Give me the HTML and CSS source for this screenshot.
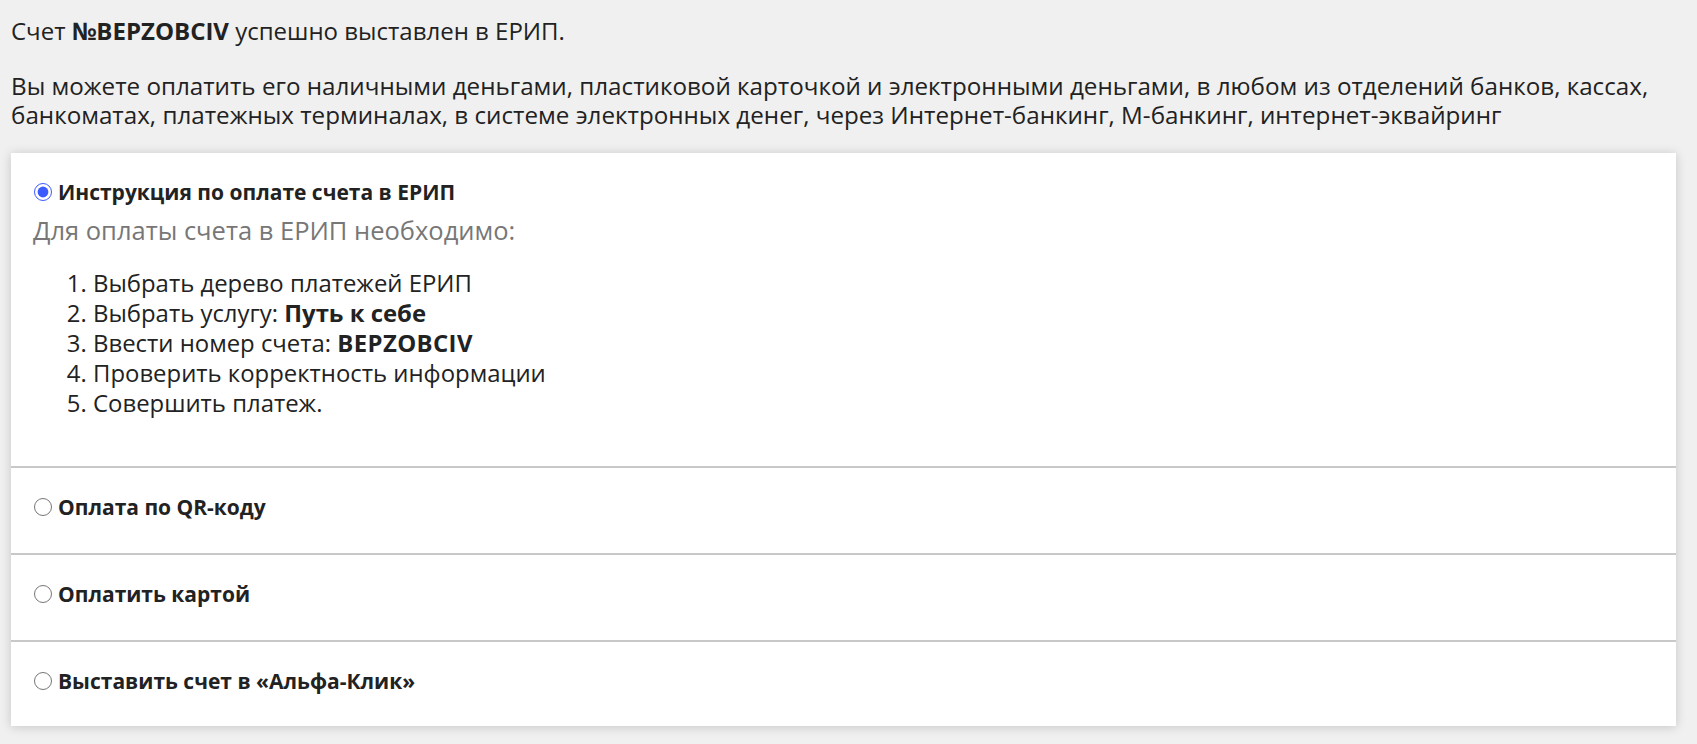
FILE: index.html
```html
<!DOCTYPE html>
<html lang="ru">
<head>
<meta charset="utf-8">
<title>Счет</title>
<link rel="stylesheet" href="styles.css">
</head>
<body>
<div class="page">
  <p class="lead">Счет <b>№BEPZOBCIV</b> успешно выставлен в ЕРИП.</p>
  <p class="info">Вы можете оплатить его наличными деньгами, пластиковой карточкой и электронными деньгами, в любом из отделений банков, кассах, банкоматах, платежных терминалах, в системе электронных денег, через Интернет-банкинг, М-банкинг, интернет-эквайринг</p>

  <div class="card">
    <section class="option first">
      <label class="option-title"><input type="radio" name="pay" checked> Инструкция по оплате счета в ЕРИП</label>
      <p class="hint">Для оплаты счета в ЕРИП необходимо:</p>
      <ol class="steps">
        <li>Выбрать дерево платежей ЕРИП</li>
        <li>Выбрать услугу: <b>Путь к себе</b></li>
        <li>Ввести номер счета: <b class="code">BEPZOBCIV</b></li>
        <li>Проверить корректность информации</li>
        <li>Совершить платеж.</li>
      </ol>
    </section>
    <section class="option">
      <label class="option-title"><input type="radio" name="pay"> Оплата по QR-коду</label>
    </section>
    <section class="option">
      <label class="option-title"><input type="radio" name="pay"> Оплатить картой</label>
    </section>
    <section class="option last">
      <label class="option-title"><input type="radio" name="pay"> Выставить счет в «Альфа-Клик»</label>
    </section>
  </div>
</div>
</body>
</html>
```

FILE: styles.css
```css
html, body {
  margin: 0;
  padding: 0;
  background: #f0f0f0;
}

body {
  font-family: "Open Sans", "Noto Sans", sans-serif;
  font-size: 24px;
  line-height: 29px;
  color: #222;
}

.page {
  padding: 16px 21px 18px 11px;
}

.lead {
  margin: 0 0 26px;
}

.info {
  margin: 0 0 24px;
  font-size: 24.2px;
}

.card {
  background: #fff;
  box-shadow: 0 1px 10px rgba(0, 0, 0, 0.18);
}

.option {
  padding: 25px 22px 32px;
  border-bottom: 2px solid #c8c8c8;
}

.option.first {
  padding-bottom: 33px;
}

.option.last {
  border-bottom: none;
  padding-bottom: 31px;
}

.option-title {
  display: flex;
  align-items: center;
  font-size: 21px;
  font-weight: 700;
  line-height: 28px;
  gap: 6px;
}

.option-title input {
  width: 18px;
  height: 18px;
  margin: 0 0 0 1px;
  accent-color: #3b5bfd;
}

.hint {
  margin: 10px 0 0;
  color: #777;
  font-size: 25.5px;
}

.steps {
  margin: 23px 0 15px;
  padding-left: 60px;
  line-height: 30px;
  font-size: 23.9px;
}

.code {
  letter-spacing: 0.4px;
}
```
